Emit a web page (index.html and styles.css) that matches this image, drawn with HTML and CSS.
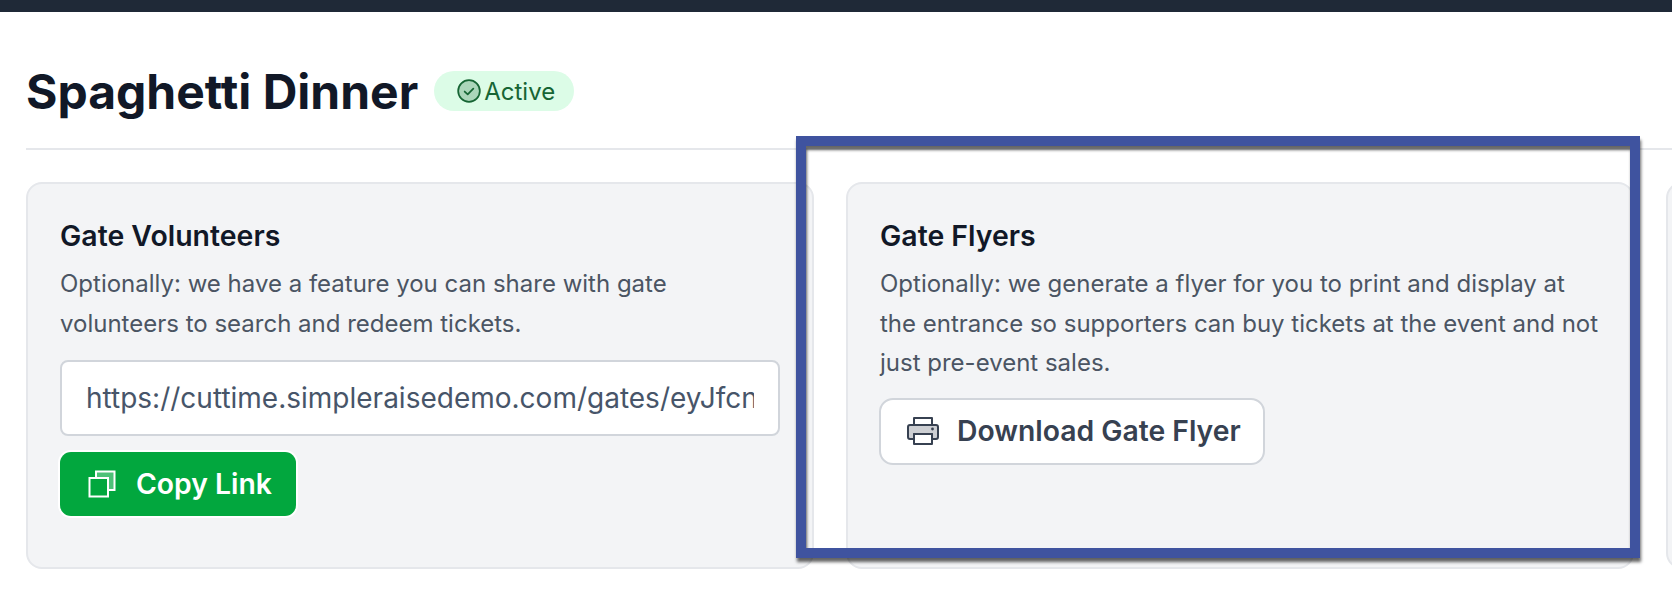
FILE: index.html
```html
<!DOCTYPE html>
<html lang="en">
<head>
    <meta charset="UTF-8">
    <meta name="viewport" content="width=device-width, initial-scale=1.0">
    <title>Spaghetti Dinner</title>
    <link rel="stylesheet" href="styles.css">
</head>
<body>

    <div class="top-bar"></div>

    <main class="page">
        <header class="page-header">
            <h1>Spaghetti Dinner</h1>
            <span class="badge">
                <svg class="badge-icon" viewBox="0 0 24 24" fill="none" stroke="currentColor" stroke-width="1.6" stroke-linecap="round" stroke-linejoin="round">
                    <circle cx="12" cy="12" r="10" fill="currentColor" fill-opacity="0.25"/>
                    <path d="M8 12.5l2.8 2.6L16 9.8"/>
                </svg>
                Active
            </span>
        </header>

        <div class="cards">
            <section class="card">
                <h2>Gate Volunteers</h2>
                <p>Optionally: we have a feature you can share with gate volunteers to search and redeem tickets.</p>
                <input class="link-input" type="text" readonly value="https://cuttime.simpleraisedemo.com/gates/eyJfcnVjaWQiOiJ2">
                <button class="btn btn-green">
                    <svg class="btn-icon" viewBox="0 0 28 28" fill="none" stroke="currentColor" stroke-width="2">
                        <path d="M8 8V1.500h18.500V20H20V8z" fill="currentColor" fill-opacity="0.3" stroke="none"/>
                        <path d="M8 8V1.500h18.500V20H20"/>
                        <rect x="1.500" y="8" width="18.500" height="18.500"/>
                    </svg>
                    Copy Link
                </button>
            </section>

            <section class="card">
                <h2>Gate Flyers</h2>
                <p>Optionally: we generate a flyer for you to print and display at the entrance so supporters can buy tickets at the event and not just pre-event sales.</p>
                <button class="btn btn-white">
                    <svg class="btn-icon" viewBox="0 0 32 28" fill="none" stroke="currentColor" stroke-width="2" stroke-linejoin="round">
                        <path d="M3 8h26a2 2 0 0 1 2 2v10a2 2 0 0 1-2 2h-4v-5H7v5H3a2 2 0 0 1-2-2V10a2 2 0 0 1 2-2z" fill="currentColor" fill-opacity="0.25"/>
                        <path d="M7 8V1h18v7"/>
                        <path d="M7 17h18v10H7z"/>
                        <circle cx="25.500" cy="12" r="1.400" fill="currentColor" stroke="none"/>
                    </svg>
                    Download Gate Flyer
                </button>
            </section>

            <section class="card"></section>
        </div>
    </main>

    <div class="highlight"></div>

</body>
</html>
```

FILE: styles.css
```css
* {
    box-sizing: border-box;
}
html, body {
    height: 100%;
}
body {
    margin: 0;
    background: #fff;
    font-family: Inter, "Liberation Sans", sans-serif;
    color: #111827;
    overflow: hidden;
}
.top-bar {
    height: 12px;
    background-color: #1f2937;
}
.page {
    padding-left: 26px;
}
.page-header {
    display: flex;
    align-items: center;
    gap: 16px;
    height: 138px;
    padding-top: 22px;
    border-bottom: 2px solid #e5e7eb;
}
.page-header h1 {
    margin: 2px 0 0;
    font-size: 48px;
    font-weight: 700;
    line-height: 1;
}
.badge {
    display: flex;
    align-items: center;
    gap: 2px;
    height: 40px;
    padding: 0 19px 0 22px;
    border-radius: 20px;
    background-color: #dcfce7;
    color: #166534;
    font-size: 24px;
}
.badge-icon {
    width: 26px;
    height: 26px;
}
.cards {
    display: grid;
    grid-template-columns: repeat(3, 788px);
    gap: 32px;
    margin-top: 32px;
}
.card {
    height: 387px;
    padding: 34px 32px;
    border: 2px solid #e5e7eb;
    border-radius: 16px;
    background-color: #f3f4f6;
}
.card h2 {
    margin: 0;
    font-size: 28.440px;
    font-weight: 600;
    line-height: 36px;
}
.card p {
    margin: 10px 0 0;
    color: #4b5563;
    font-size: 24px;
    line-height: 39.500px;
}
.link-input {
    display: block;
    width: 720px;
    height: 76px;
    margin-top: 17px;
    padding: 0 24px;
    border: 2px solid #d1d5db;
    border-radius: 8px;
    background: #fff;
    color: #475569;
    font: 400 28px Inter, "Liberation Sans", sans-serif;
}
.btn {
    display: flex;
    align-items: center;
    white-space: nowrap;
    font: 600 28.300px Inter, "Liberation Sans", sans-serif;
}
.btn-icon {
    flex: none;
    height: 28px;
}
.btn-green {
    gap: 20px;
    margin-top: 16px;
    width: 236px;
    height: 64px;
    padding: 0 28px;
    border: none;
    border-radius: 11px;
    background-color: #02a73e;
    color: #fff;
    box-shadow: 0 0 0 2px #fff;
}
.btn-green .btn-icon {
    width: 28px;
}
.btn-white {
    gap: 18px;
    margin: 15px 0 0 -1px;
    width: 386px;
    height: 67px;
    padding: 0 26px;
    border: 2px solid #d1d5db;
    border-radius: 14px;
    background-color: #fff;
    color: #374151;
}
.btn-white .btn-icon {
    width: 32px;
}
.highlight {
    position: absolute;
    left: 796px;
    top: 136px;
    width: 844px;
    height: 422px;
    border: 10px solid #3f539f;
    box-shadow: 1px 4px 3px rgba(0, 0, 0, 0.6), inset 1px 4px 3px rgba(0, 0, 0, 0.6);
}
```
